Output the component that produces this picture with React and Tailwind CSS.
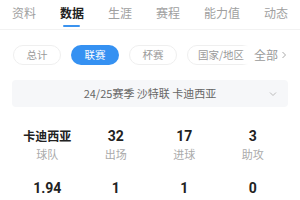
const tabs = ['资料', '数据', '生涯', '赛程', '能力值', '动态']
const chips = ['总计', '联赛', '杯赛', '国家/地区']

const row1 = [
  { v: '卡迪西亚', l: '球队', cn: true },
  { v: '32', l: '出场' },
  { v: '17', l: '进球' },
  { v: '3', l: '助攻' },
]
const row2 = ['1.94', '1', '1', '0']

export default function App() {
  return (
    <div className="w-[300px] h-[200px] overflow-hidden bg-white font-['Noto_Sans_CJK_SC','Noto_Sans',sans-serif]">
      {/* Tabs */}
      <div className="h-[30px] border-b border-[#f2f2f2] flex justify-between px-3">
        {tabs.map((t) => (
          <div key={t} className="relative flex flex-col items-center">
            <span
              className={`text-[12px] leading-[25px] ${
                t === '数据' ? 'font-bold text-[#222]' : 'text-[#a0a0a0]'
              }`}
            >
              {t}
            </span>
            {t === '数据' && <div className="w-[17px] h-[2px] rounded-full bg-[#3b93ef]" />}
          </div>
        ))}
      </div>

      {/* Filter chips */}
      <div className="flex items-center mt-[15px] pl-[13px] pr-[13px]">
        <div className="relative flex-1 overflow-hidden">
          <div className="flex gap-[10px]">
            {chips.map((c) => (
              <div
                key={c}
                className={`shrink-0 h-5 rounded-full flex items-center justify-center text-[10.5px] ${
                  c === '国家/地区' ? 'px-[10px]' : 'w-12'
                } ${
                  c === '联赛'
                    ? 'bg-[#3591f2] text-white'
                    : 'border border-[#efefef] text-[#9a9a9a]'
                }`}
              >
                {c}
              </div>
            ))}
          </div>
          <div className="absolute right-0 top-0 h-5 w-[6px] bg-gradient-to-r from-transparent to-white" />
        </div>
        <div className="flex items-center ml-[6px] text-[12px] text-[#9a9a9a]">
          全部
          <svg width="6" height="8" viewBox="0 0 6 8" className="ml-[3px]">
            <path d="M1.5 1L4.5 4L1.5 7" stroke="#aaa" strokeWidth="1" fill="none" />
          </svg>
        </div>
      </div>

      {/* Season bar */}
      <div className="mx-3 mt-[15px] h-[27px] rounded bg-[#f6f7f9] relative flex items-center justify-center">
        <span className="text-[11px] text-[#666]">24/25赛季 沙特联 卡迪西亚</span>
        <svg width="10" height="10" viewBox="0 0 10 10" className="absolute right-[10px] top-[9px]">
          <path d="M2 3.5L5 6.5L8 3.5" stroke="#bbb" strokeWidth="1" fill="none" />
        </svg>
      </div>

      {/* Stats */}
      <div className="grid grid-cols-4 px-[13px] mt-[19px]">
        {row1.map((s) => (
          <div key={s.l} className="flex flex-col items-center">
            <span
              className={`font-bold text-[#222] leading-[20px] ${
                s.cn ? 'text-[12px]' : "text-[14px] font-['Roboto',sans-serif]"
              }`}
            >
              {s.v}
            </span>
            <span className="text-[11px] text-[#aaa] leading-[16px]">{s.l}</span>
          </div>
        ))}
      </div>
      <div className="grid grid-cols-4 px-[13px] mt-[16px]">
        {row2.map((v, i) => (
          <div key={i} className="flex flex-col items-center">
            <span className="font-bold text-[#222] text-[14px] leading-[20px] font-['Roboto',sans-serif]">{v}</span>
          </div>
        ))}
      </div>
    </div>
  )
}
